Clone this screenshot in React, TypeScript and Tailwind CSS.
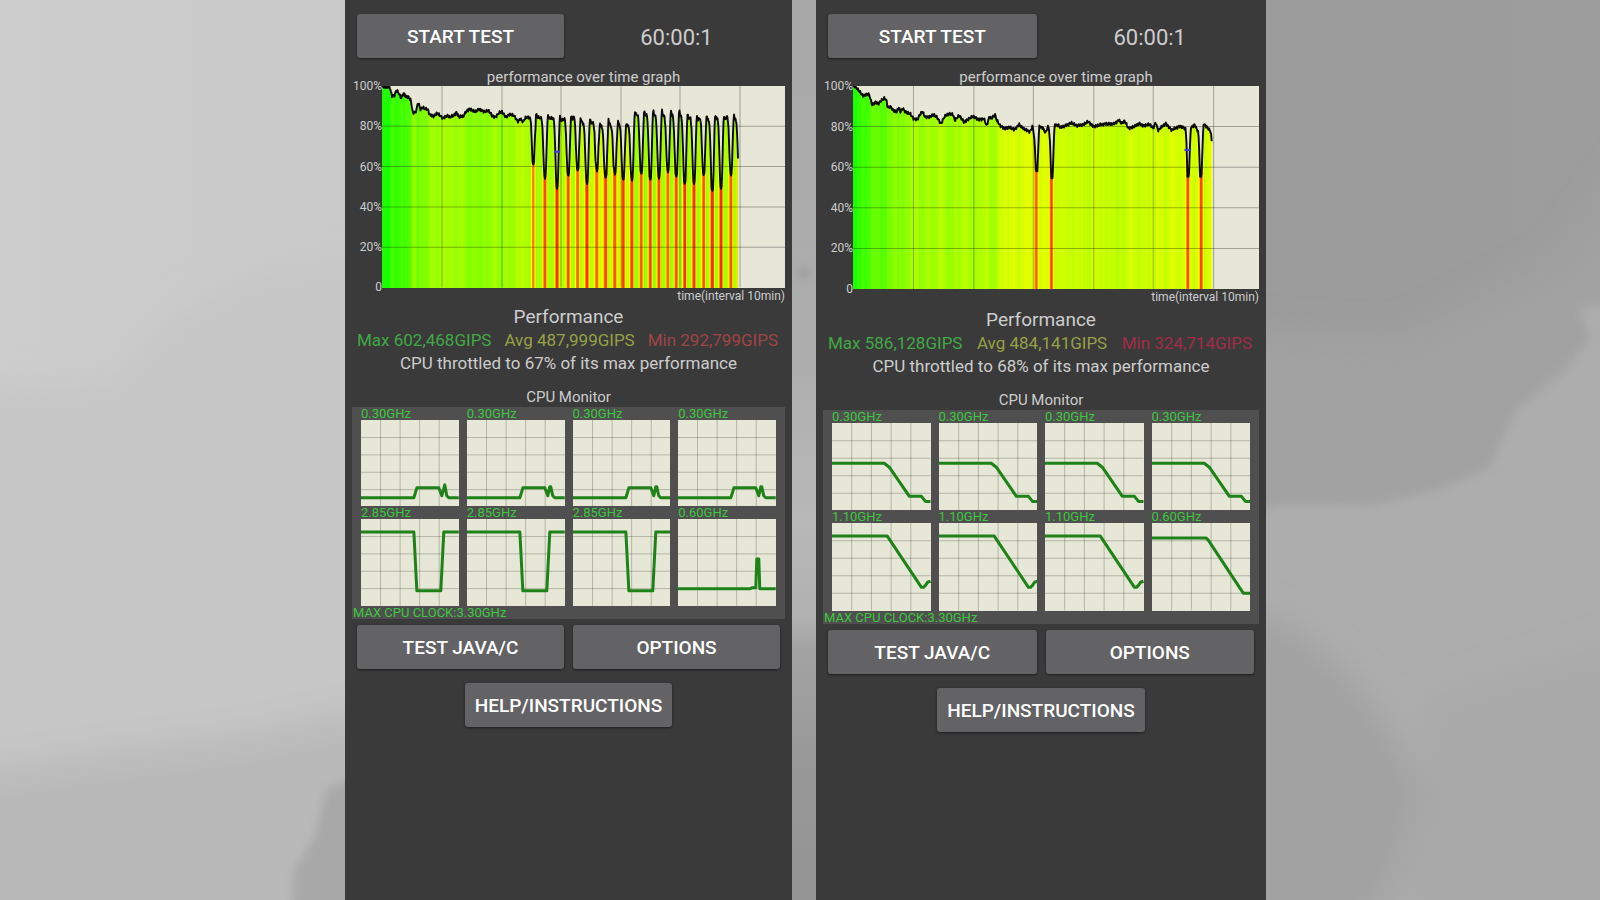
import React from "react";

type Point = [number, number]

interface Core {
    clock: string
    line: string
}

interface PhoneData {
    id: string
    time: string
    trace: Point[]
    marker: Point
    max: string
    avg: string
    min: string
    minClass: string
    summaryClass: string
    throttled: number
    cores: Core[]
    maxClock: string
}

// x runs 0..403 (60 units are roughly 10 minutes), the second value is a percentage
const leftStart: Point[] = [
    [0, 99.5], [7.7, 99.5], [10, 95], [12.7, 95.5], [14.3, 98], [16.7, 96.5], [19, 94], [21.7, 96.5], [23.3, 95],
    [26.7, 94.5], [28.7, 93], [31, 86.5], [33.7, 87], [36.3, 92], [38.3, 88.5], [41, 89.3], [43.3, 88.5], [45.7, 88.5],
    [47.7, 85.7], [51.7, 85], [55, 86.5], [58, 85.3], [61, 84], [65, 85.3], [68, 84.6], [71.7, 85.3], [74.3, 87],
    [77, 84.6], [81.7, 85.2], [84.3, 87.5], [87.7, 88.7], [92.3, 87.2], [97.7, 88.5], [102.3, 87.2], [106.7, 87.8],
    [110, 85.3], [113.3, 84.5], [116.7, 86.5], [120, 87.2], [124, 84.5], [127.3, 86], [132.3, 85.2], [135.7, 82.3],
    [138.3, 83.7], [141, 82.3], [143.7, 84.3], [147.7, 84.5], [149, 82],
]

// dip position, dip bottom, peak after it, level before the next dip
const leftDips: [number, number, number, number][] = [
    [151.3, 60.5, 86.5, 84], [163, 54, 86, 84], [175, 49, 85, 83.5], [186.3, 55, 85.5, 85], [195.7, 57.5, 84.5, 81],
    [205, 51.3, 84, 81.5], [215, 57.5, 82, 79.5], [223.7, 54, 83.5, 79], [233, 56, 83, 80.5], [241.3, 53, 82, 80.5],
    [250, 53, 88, 85.5], [259.3, 56, 88, 85.5], [268.3, 53, 88, 85], [277, 54, 88, 84.5], [286, 57, 88, 85],
    [294.3, 54.5, 88, 85], [302.7, 51, 86, 84], [312, 51.3, 85.5, 84], [321.7, 55.3, 85.5, 83], [330.3, 47.5, 86, 84],
    [339, 49, 85.7, 84.5], [349, 55.6, 86, 82],
]

const leftTrace: Point[] = [...leftStart]
leftDips.forEach(([x, bottom, peak, level], index) => {
    const next = leftDips[index + 1]
    leftTrace.push([x - 0.8, bottom + 2], [x, bottom], [x + 0.8, bottom + 2], [x + 1.4, bottom + 12], [x + 2.2, peak - 7], [x + 2.8, peak])
    if (next) {
        leftTrace.push([x + 3.8, peak - 2], [next[0] - 3.4, level], [next[0] - 2.5, level - 5], [next[0] - 1.6, level - 18])
    }
})
leftTrace.push([352.8, 84], [354.4, 82], [355.2, 76], [356, 64])

const rightTrace: Point[] = [
    [0, 99.7], [2.6, 99.7], [5.3, 98], [8, 96.4], [10.3, 95], [13, 96], [16.2, 95.7], [19, 90.6], [22, 92], [25, 91.3],
    [28.5, 93], [31.4, 94], [33.4, 92.6], [34.4, 89.3], [37.4, 89.8], [40, 88], [43.3, 87], [45.3, 89.6], [47.3, 87.2],
    [49.3, 89], [52, 87.2], [56.6, 86.3], [60.5, 83.8], [64, 83.5], [66.5, 86], [68.8, 87.5], [71.5, 84.8], [75.8, 84.8],
    [80.4, 85.8], [83.7, 84.3], [87.4, 81.4], [90.7, 84.8], [93.7, 86], [99, 86.2], [101, 83.2], [105.5, 85.5],
    [110.2, 82.2], [114.8, 83.8], [119.4, 85], [124.4, 83.5], [130, 83.8], [132.7, 80.5], [135.3, 84.8], [137.6, 84.2],
    [141, 85.8], [142.6, 83.2], [146, 80.5], [151, 79], [155, 79.7], [160, 78.5], [165, 81], [169, 79], [175.7, 77.5],
    [178.4, 80.2], [180.2, 73], [181.6, 58], [183, 58], [184.2, 73], [184.8, 80], [188.3, 79.5], [191, 77],
    [194.2, 80.5], [195.6, 72], [196.8, 54.6], [198.2, 54.6], [199.4, 74], [200.2, 81], [204, 80.5], [206, 79.5],
    [212, 80.7], [216.4, 81.8], [222, 80.5], [228.7, 81], [233.6, 82.5], [238.6, 80], [250, 81.4], [258.5, 81.2],
    [264, 83.2], [266.7, 81.5], [269.7, 82.8], [273.3, 79.2], [280, 80.2], [284, 81.5], [288, 80.5], [294.8, 81],
    [298, 79.2], [300.5, 82], [302.8, 78.2], [310.4, 81.5], [316.3, 78.3], [324.6, 80.2], [330.2, 79], [331, 72],
    [332, 55.3], [333.4, 55.3], [334.6, 72], [335.2, 79.2], [338.8, 81], [342.8, 77.3], [343.5, 70], [344.5, 55.3],
    [345.9, 55.3], [347.1, 72], [348, 81.5], [351, 80], [355.3, 77.3], [356, 72.8],
]

const smallLoadA = "0,78 53,78 56,68 78,68 81,76 84,65 86,76 88,78 98,78"
const smallLoadB = "0,78 53,78 56,68 78,68 81,76 83,67 84,67 86,76 88,78 98,78"
const bigLoad = "0,13 53,13 56,72 80,72 83,13 98,13"
const slope = "0,40 52,40 57,44 77,73 89,73 93,78 98,78"
const steep = "0,13 55,13 57,16 89,64 91,64 93,62 95,59 98,58"

const phones: PhoneData[] = [
    {
        id: "left",
        time: "60:00:1",
        trace: leftTrace,
        marker: [172, 67.4],
        max: "602,468",
        avg: "487,999",
        min: "292,799",
        minClass: "text-[#a04444]",
        summaryClass: "mt-0.5",
        throttled: 67,
        cores: [
            { clock: "0.30GHz", line: smallLoadA },
            { clock: "0.30GHz", line: smallLoadB },
            { clock: "0.30GHz", line: smallLoadB },
            { clock: "0.30GHz", line: smallLoadB },
            { clock: "2.85GHz", line: bigLoad },
            { clock: "2.85GHz", line: bigLoad },
            { clock: "2.85GHz", line: bigLoad },
            { clock: "0.60GHz", line: "0,70 72,70 74,69 78,69 79,40 81,40 82,70 98,70" },
        ],
        maxClock: "3.30GHz",
    },
    {
        id: "right",
        time: "60:00:1",
        trace: rightTrace,
        marker: [329, 68.5],
        max: "586,128",
        avg: "484,141",
        min: "324,714",
        minClass: "text-[#a32c48]",
        summaryClass: "mt-1",
        throttled: 68,
        cores: [
            { clock: "0.30GHz", line: slope },
            { clock: "0.30GHz", line: slope },
            { clock: "0.30GHz", line: slope },
            { clock: "0.30GHz", line: slope },
            { clock: "1.10GHz", line: steep },
            { clock: "1.10GHz", line: steep },
            { clock: "1.10GHz", line: steep },
            { clock: "0.60GHz", line: "0,15 54,15 56,17 87,64 91,70 98,70" },
        ],
        maxClock: "3.30GHz",
    },
]

const valueAt = (trace: Point[], x: number) => {
    const index = trace.findIndex((point) => point[0] >= x)
    if (index <= 0) return trace[0][1]
    const [x0, v0] = trace[index - 1]
    const [x1, v1] = trace[index]
    return v0 + ((v1 - v0) * (x - x0)) / (x1 - x0 || 1)
}

const jitter = (x: number) => Math.sin(x * 2.9) * 0.45 + Math.sin(x * 5.3 + 1) * 0.35

const barColor = (value: number) => {
    const red = Math.min(255, 25 + (100 - value) * 9.2)
    const green = value >= 75 ? 255 : Math.max(40, 255 - (75 - value) * 9.4)
    return `rgb(${Math.round(red)},${Math.round(green)},0)`
}

const PerformanceGraph: React.FunctionComponent<{ trace: Point[], marker: Point }> = ({ trace, marker }) => {
    const columns = new Array(356).fill(0).map((_, x) => {
        const value = valueAt(trace, x + 0.5)
        return { x, value, color: barColor(value > 75 ? value + jitter(x * 0.4) : value) }
    })
    const line = new Array(713).fill(0).map((_, index) => {
        const x = index / 2
        const value = valueAt(trace, x)
        const shown = Math.min(100, value > 76 ? value + jitter(x) : value)
        return `${x},${(200 - shown * 2).toFixed(2)}`
    })

    return (
        <svg className="block w-full aspect-[2/1] bg-[#e6e7d6]" viewBox="0 0 403 200" preserveAspectRatio="none" role="img" aria-label="performance over time">
            <g shapeRendering="crispEdges">
                {columns.map((column) => (
                    <rect key={column.x} x={column.x} y={200 - column.value * 2} width="1.3" height={column.value * 2} fill={column.color} />
                ))}
            </g>
            <g stroke="#000" strokeOpacity="0.3" strokeWidth="1">
                {[40, 80, 120, 160].map((y) => <line key={y} x1="0" x2="403" y1={y} y2={y} />)}
                {[60, 120, 179, 239, 298, 358].map((x) => <line key={x} x1={x} x2={x} y1="0" y2="200" />)}
            </g>
            <polyline points={line.join(" ")} fill="none" stroke="#0a0a0a" strokeWidth="1.9" strokeLinejoin="round" />
            <rect x={marker[0]} y={199 - marker[1] * 2} width="6" height="2" fill="#3a3af0" />
        </svg>
    )
}

const CoreChart: React.FunctionComponent<Core> = ({ clock, line }) => (
    <div>
        <div className="h-[13px] text-[13px] leading-[13px] text-[#3dc83f]">{clock}</div>
        <svg className="block w-full aspect-[98/87] bg-[#e6e7d6]" viewBox="0 0 98 87" preserveAspectRatio="none" aria-hidden="true">
            <g stroke="#000" strokeOpacity="0.22" strokeWidth="1">
                {[19.6, 39.2, 58.8, 78.4].map((x) => <line key={x} x1={x} x2={x} y1="0" y2="87" />)}
                {[17.6, 35, 52.4, 69.8].map((y) => <line key={y} x1="0" x2="98" y1={y} y2={y} />)}
            </g>
            <polyline points={line} fill="none" stroke="#1e8218" strokeWidth="3" strokeLinejoin="round" />
        </svg>
    </div>
)

const Button: React.FunctionComponent<{ children: React.ReactNode }> = ({ children }) => (
    <button type="button" className="h-11 w-full rounded-[3px] bg-[#636365] pt-0.5 text-[19px] font-medium text-white shadow-sm shadow-black/40">
        {children}
    </button>
)

const Phone: React.FunctionComponent<{ phone: PhoneData }> = ({ phone }) => (
    <main className="min-h-screen bg-[#3a3a3a] pt-[14px] text-[#cdcdcd]">
        <div className="grid grid-cols-2 items-center gap-[9px] px-3">
            <Button>START TEST</Button>
            <div className="pt-1 text-center text-[22px] leading-7">{phone.time}</div>
        </div>

        <section className="mt-[10px] px-[7px]">
            <div className="grid grid-cols-[30px_1fr]">
                <h2 className="col-start-2 h-[18px] text-center text-[15px] leading-[18px]">performance over time graph</h2>
                <div className="-my-[7px] flex flex-col justify-between text-right text-xs leading-[14px] whitespace-nowrap">
                    <span>100%</span>
                    <span>80%</span>
                    <span>60%</span>
                    <span>40%</span>
                    <span>20%</span>
                    <span>0</span>
                </div>
                <PerformanceGraph trace={phone.trace} marker={phone.marker} />
            </div>
            <div className="pt-px text-right text-xs leading-[14px]">time(interval 10min)</div>
        </section>

        <section className={`${phone.summaryClass} text-center text-[17px] leading-[23px]`}>
            <h2 className="text-[19px] leading-6">Performance</h2>
            <div className="flex justify-between pl-3 pr-[14px] whitespace-nowrap">
                <span className="text-[#41a845]">Max {phone.max}GIPS</span>
                <span className="text-[#96a146]">Avg {phone.avg}GIPS</span>
                <span className={phone.minClass}>Min {phone.min}GIPS</span>
            </div>
            <p>CPU throttled to {phone.throttled}% of its max performance</p>
        </section>

        <section className="mt-[13px] px-[7px]">
            <h2 className="text-center text-[15px] leading-[19px]">CPU Monitor</h2>
            <div className="bg-[#4f4f4f]">
                <div className="grid grid-cols-4 gap-x-2 px-[9px]">
                    {phone.cores.map((core, index) => (
                        <CoreChart key={index} {...core} />
                    ))}
                </div>
                <div className="pl-px text-[13px] leading-[13px] text-[#3dc83f]">MAX CPU CLOCK:{phone.maxClock}</div>
            </div>
        </section>

        <div className="mt-[6px] grid grid-cols-2 gap-x-[9px] gap-y-[14px] px-3">
            <Button>TEST JAVA/C</Button>
            <Button>OPTIONS</Button>
            <div className="col-span-2 flex justify-center">
                <div className="w-[49%]">
                    <Button>HELP/INSTRUCTIONS</Button>
                </div>
            </div>
        </div>
    </main>
)

// Cloudy grey backdrop behind the two phones
const Backdrop = () => (
    <svg className="absolute inset-0 h-full w-full" viewBox="0 0 1600 900" preserveAspectRatio="none" aria-hidden="true">
        <defs>
            <linearGradient id="base" x1="0" x2="1" y1="0" y2="0">
                <stop offset="0" stopColor="#cdcdcd" />
                <stop offset="0.22" stopColor="#c9c9c9" />
                <stop offset="0.5" stopColor="#a9a9a9" />
                <stop offset="0.8" stopColor="#9b9b9b" />
                <stop offset="1" stopColor="#9d9d9d" />
            </linearGradient>
            <linearGradient id="gap" x1="0" x2="0" y1="0" y2="1">
                <stop offset="0" stopColor="#a8a8a8" />
                <stop offset="0.4" stopColor="#aeaeae" />
                <stop offset="0.58" stopColor="#b8b8b8" />
                <stop offset="0.69" stopColor="#b0b0b0" />
                <stop offset="0.72" stopColor="#a3a3a3" />
                <stop offset="0.85" stopColor="#989898" />
                <stop offset="1" stopColor="#949494" />
            </linearGradient>
            <filter id="soft" x="-20%" y="-20%" width="140%" height="140%">
                <feGaussianBlur stdDeviation="16" />
            </filter>
            <filter id="edge" x="-20%" y="-20%" width="140%" height="140%">
                <feGaussianBlur stdDeviation="5" />
            </filter>
        </defs>
        <rect width="1600" height="900" fill="url(#base)" />
        <rect x="780" width="50" height="900" fill="url(#gap)" />
        <g filter="url(#soft)">
            <path d="M-40 390 L110 380 L180 310 L260 270 L380 260 L380 960 L-40 960 Z" fill="#c6c6c6" />
            <path d="M-40 775 L80 755 L240 735 L380 705 L380 960 L-40 960 Z" fill="#b9b9b9" />
            <path d="M1240 330 L1400 340 L1560 260 L1640 150 L1640 600 L1240 600 Z" fill="#a2a2a2" />
        </g>
        <g filter="url(#edge)">
            <path d="M1240 512 L1290 504 L1370 506 L1440 490 L1490 468 L1515 412 L1560 375 L1590 340 L1580 308 L1640 300 L1640 960 L1240 960 Z" fill="#adadad" />
            <path d="M290 960 L294 870 L315 835 L325 790 L380 765 L380 960 Z" fill="#a8a8a8" />
            <ellipse cx="804" cy="273" rx="4" ry="4" fill="#8c8c8c" />
        </g>
        <g filter="url(#soft)">
            <path d="M1240 610 L1290 625 L1345 670 L1390 730 L1420 790 L1395 880 L1350 960 L1240 960 Z" fill="#a2a2a2" />
            <path d="M1430 700 L1640 640 L1640 960 L1400 960 Z" fill="#a9a9a9" />
        </g>
    </svg>
)

export default function App() {
    return (
        <div className="relative min-h-screen overflow-hidden bg-[#b0b0b0] font-['Roboto',sans-serif]">
            <Backdrop />
            <div className="relative grid grid-cols-[345fr_447fr_24fr_450fr_334fr]">
                {phones.map((phone, index) => (
                    <div key={phone.id} className={index === 0 ? "col-start-2" : "col-start-4"}>
                        <Phone phone={phone} />
                    </div>
                ))}
            </div>
        </div>
    )
}
